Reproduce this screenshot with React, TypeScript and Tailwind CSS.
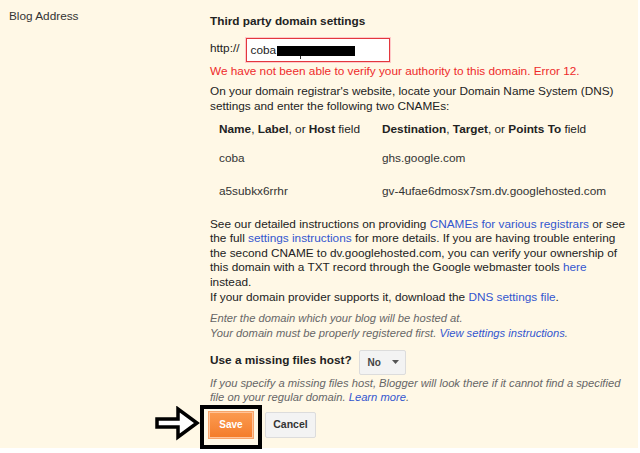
import React from "react";

const font = { fontFamily: '"Liberation Sans", Arial, sans-serif' };

function Link({ children }: { children: React.ReactNode }) {
  return <span className="text-[#3356cf]">{children}</span>;
}

export default function App() {
  return (
    <div className="w-[640px] h-[453px] bg-white overflow-hidden" style={font}>
      <div className="w-[638px] h-[448px] bg-[#fff8e6] flex text-[11.8px] leading-[15px] text-[#222]">
        <div className="w-[210px] shrink-0 pl-[9px] pt-[8.5px] text-[#333]">Blog Address</div>
        <div className="flex flex-col pt-[14px] whitespace-nowrap">
          <div className="font-bold text-[#222]">Third party domain settings</div>

          <div className="flex items-center mt-[9px] h-[24px]">
            <span className="mr-[6px] -mt-[3px]">http://</span>
            <div className="relative w-[144px] h-[24px] bg-white border border-[#e3373d] shadow-[0_0_0_1px_#ffc9c9] flex items-center pl-[4px]">
              <span>coba</span>
              <div className="absolute left-[30px] top-[7px] w-[78px] h-[10px] bg-black" />
              <div className="absolute left-[53px] top-[17px] w-[1px] h-[3px] bg-[#333]" />
            </div>
          </div>

          <div className="mt-[1.5px] text-[#ee2b2b]">
            We have not been able to verify your authority to this domain. Error 12.
          </div>

          <div className="mt-[5px]">
            <div>On your domain registrar's website, locate your Domain Name System (DNS)</div>
            <div>settings and enter the following two CNAMEs:</div>
          </div>

          <div className="pl-[9px]">
            <div className="flex mt-[8px]">
              <div className="w-[163px]">
                <b>Name</b>, <b>Label</b>, or <b>Host</b> field
              </div>
              <div>
                <b>Destination</b>, <b>Target</b>, or <b>Points To</b> field
              </div>
            </div>
            <div className="flex mt-[14px] text-[#333]">
              <div className="w-[163px]">coba</div>
              <div>ghs.google.com</div>
            </div>
            <div className="flex mt-[18px] text-[#333]">
              <div className="w-[163px]">a5subkx6rrhr</div>
              <div>gv-4ufae6dmosx7sm.dv.googlehosted.com</div>
            </div>
          </div>

          <div className="mt-[18.2px] leading-[14.6px]">
            <div>
              See our detailed instructions on providing <Link>CNAMEs for various registrars</Link> or see
            </div>
            <div>
              the full <Link>settings instructions</Link> for more details. If you are having trouble entering
            </div>
            <div>the second CNAME to dv.googlehosted.com, you can verify your ownership of</div>
            <div>
              this domain with a TXT record through the Google webmaster tools <Link>here</Link>
            </div>
            <div>instead.</div>
            <div>
              If your domain provider supports it, download the <Link>DNS settings file</Link>.
            </div>
          </div>

          <div className="mt-[7.2px] italic text-[#666] text-[11.2px]">
            <div>Enter the domain which your blog will be hosted at.</div>
            <div>
              Your domain must be properly registered first. <Link>View settings instructions</Link>.
            </div>
          </div>

          <div className="flex items-center mt-[8.5px] h-[25px]">
            <span className="font-bold -mt-[3px] text-[#222]">Use a missing files host?</span>
            <div className="ml-[7px] w-[47px] h-[25px] bg-[#f3f3f3] border border-[#dcdcdc] rounded-[2px] flex items-center pl-[8px] text-[10px] font-bold text-[#444]">
              <span>No</span>
              <svg width="7" height="4" viewBox="0 0 7 4" className="ml-[11px]">
                <polygon points="0,0 7,0 3.5,4" fill="#555" />
              </svg>
            </div>
          </div>

          <div className="mt-[1px] italic text-[#666] text-[11.2px] leading-[14px]">
            <div>If you specify a missing files host, Blogger will look there if it cannot find a specified</div>
            <div>
              file on your regular domain. <Link>Learn more</Link>.
            </div>
          </div>

          <div className="relative flex items-center mt-[8px] h-[26px]">
            <div className="w-[44px] h-[26px] -ml-[1px] flex items-center justify-center bg-gradient-to-b from-[#fb9a4f] to-[#f47d2a] border border-[#ffc49a] shadow-[0_0_0_1px_#f7a46a] text-white font-bold text-[10px]">
              Save
            </div>
            <div className="ml-[12px] w-[51px] h-[26px] flex items-center justify-center bg-[#f3f3f3] border border-[#dcdcdc] rounded-[2px] text-[#333] font-bold text-[10.5px]">
              Cancel
            </div>
            <div className="absolute left-[-10px] top-[-7px] w-[62px] h-[44px] border-[4px] border-black" />
            <svg
              className="absolute left-[-57px] top-[-6px]"
              width="48"
              height="36"
              viewBox="0 0 48 36"
            >
              <polygon
                points="4,13 25,13 25,3 44,17 25,31 25,21 4,21"
                fill="white"
                stroke="black"
                strokeWidth="3.5"
                strokeLinejoin="miter"
              />
            </svg>
          </div>
        </div>
      </div>
    </div>
  );
}
